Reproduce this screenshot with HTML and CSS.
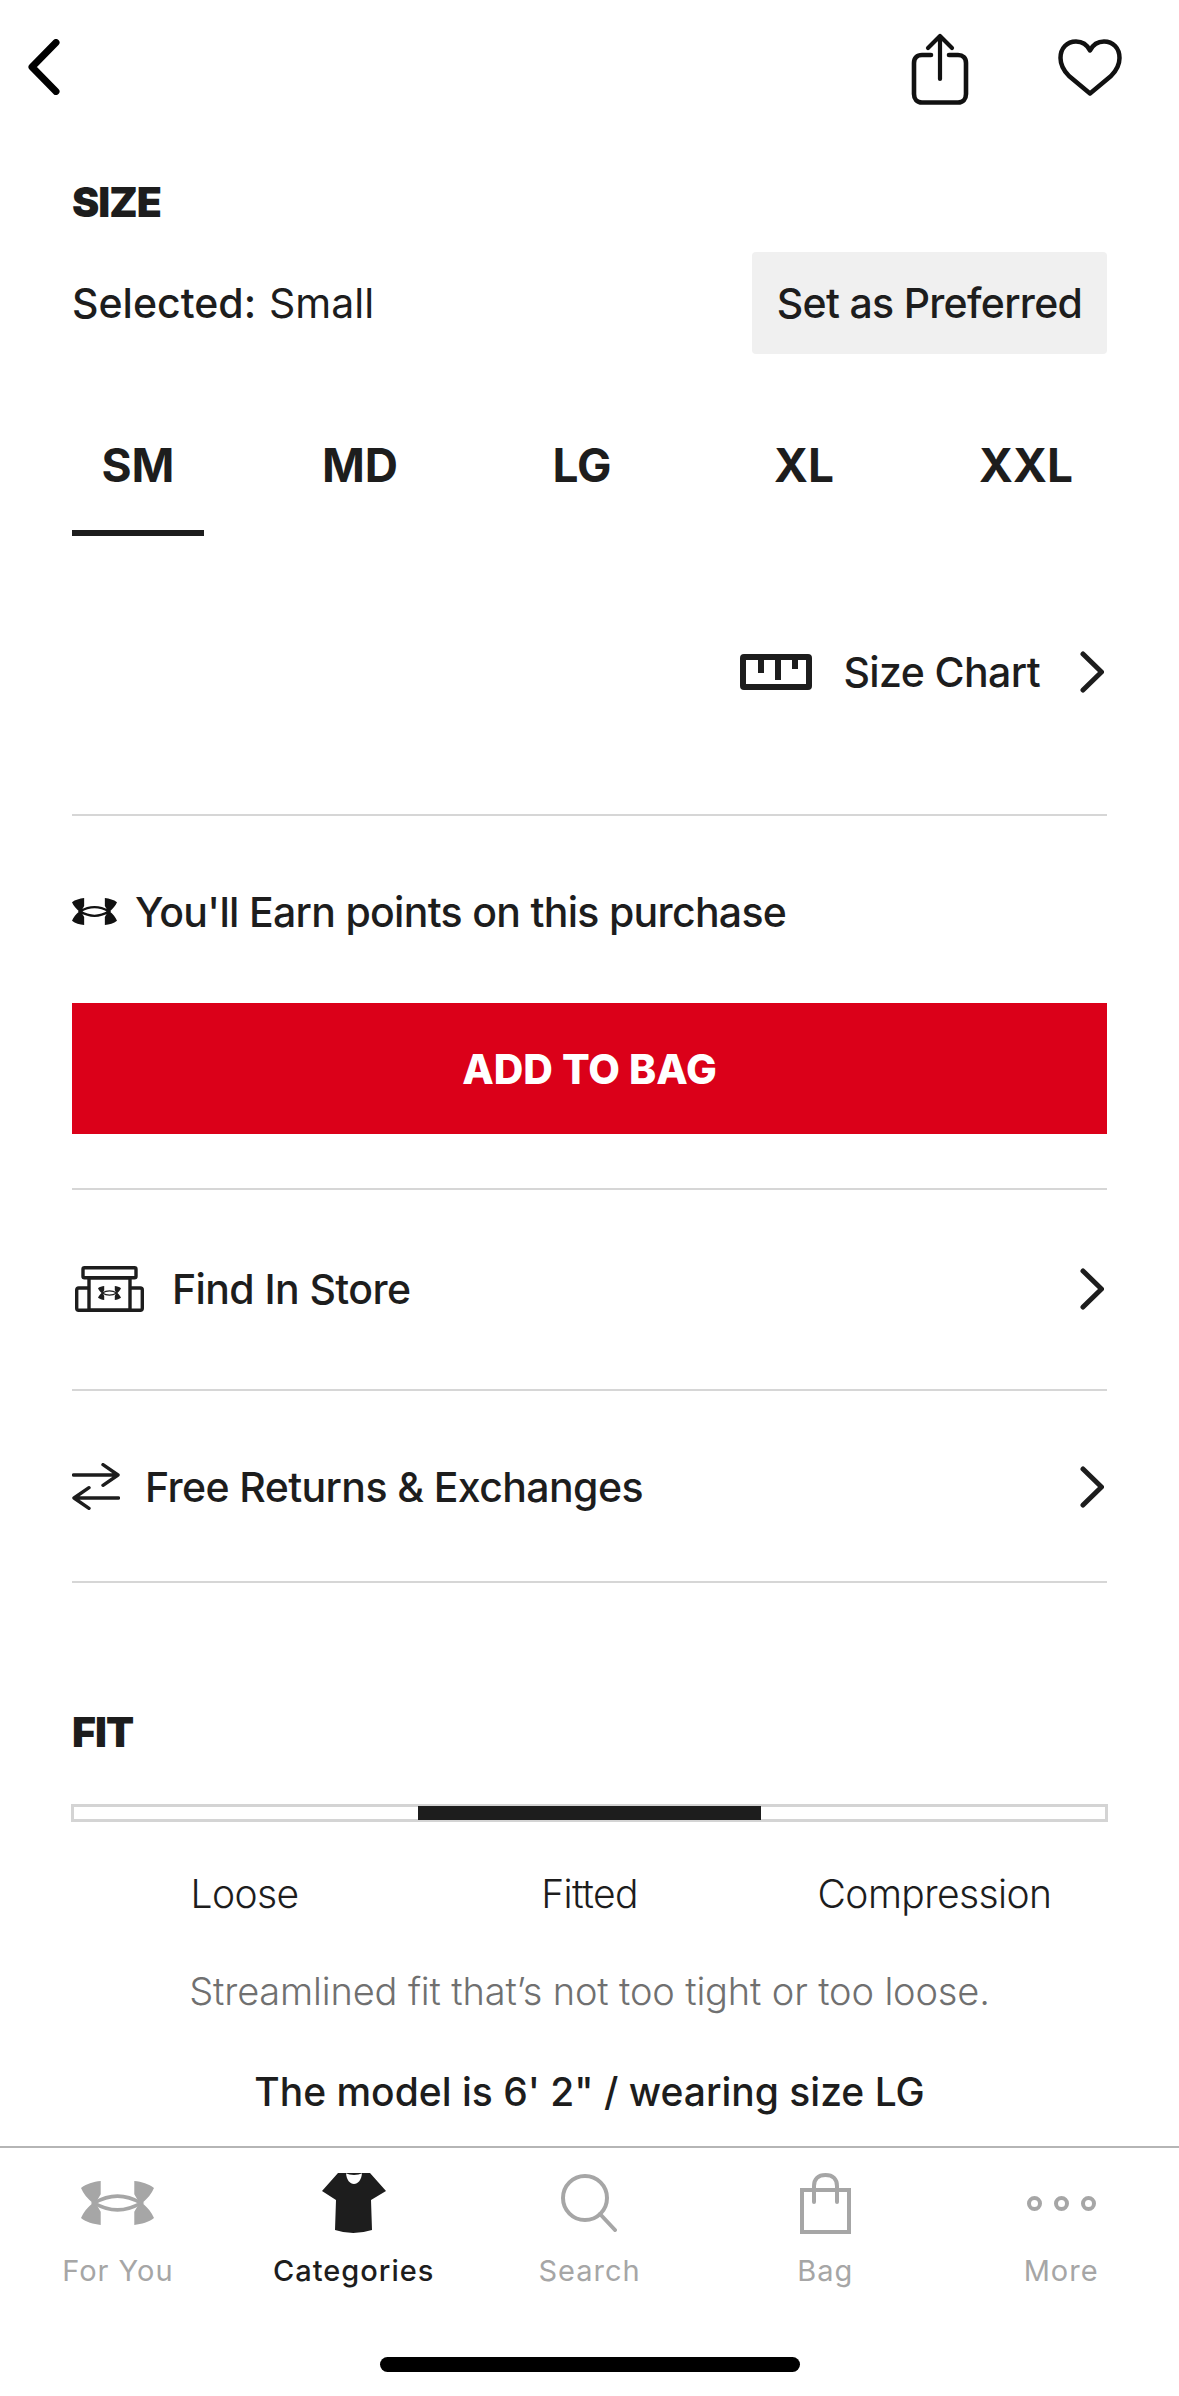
FILE: index.html
```html
<!DOCTYPE html>
<html lang="en">
<head>
<meta charset="utf-8">
<title>Size</title>
<link rel="stylesheet" href="styles.css">
</head>
<body>
<svg class="defs" width="0" height="0" aria-hidden="true">
  <symbol id="ua" viewBox="0 0 100 60">
    <path d="M27 0C17 1 7 4 0 9.500C3 17 9 24 16 30C9 36 3 43 0 50.500C7 56 17 59 27 60V42L20 30L27 18Z"/>
    <path d="M73 0C83 1 93 4 100 9.500C97 17 91 24 84 30C91 36 97 43 100 50.500C93 56 83 59 73 60V42L80 30L73 18Z"/>
    <path d="M18 30Q50 11 82 30Q50 49 18 30Z" fill="none" stroke="currentColor" stroke-width="5"/>
  </symbol>
  <symbol id="chev" viewBox="0 0 24 42">
    <path d="M3 3L21.500 21L3 39" fill="none" stroke="currentColor" stroke-width="5" stroke-linecap="round" stroke-linejoin="round"/>
  </symbol>
</svg>
<div class="screen">
  <header class="topbar">
    <svg class="ic-back" viewBox="0 0 32 56"><path d="M28 3.500L4 28L28 52.500" fill="none" stroke="#000" stroke-width="7" stroke-linecap="round" stroke-linejoin="round"/></svg>
    <div class="top-actions">
      <svg class="ic-share" viewBox="0 0 58 72"><path d="M20 22H11C6 22 3 25 3 30V61C3 66 6 69.500 11 69.500H47C52 69.500 55 66 55 61V30C55 25 52 22 47 22H38" fill="none" stroke="#111" stroke-width="4.600" stroke-linecap="round"/><path d="M29 46V4M17 15L29 3L41 15" fill="none" stroke="#111" stroke-width="4.200" stroke-linecap="round" stroke-linejoin="round"/></svg>
      <svg class="ic-heart" viewBox="0 0 64 57"><path d="M32 54.500L11 37C5 31 2.500 26 2.500 19C2.500 9 9 2.500 18 2.500C24 2.500 29 5.500 32 11.500C35 5.500 40 2.500 46 2.500C55 2.500 61.500 9 61.500 19C61.500 26 59 31 53 37Z" fill="none" stroke="#111" stroke-width="4.500" stroke-linejoin="round"/></svg>
    </div>
  </header>

  <main class="content">
    <h2 class="heading heading-size">SIZE</h2>
    <div class="selected-row">
      <p class="selected"><span class="selected-label">Selected:</span><span class="selected-value">Small</span></p>
      <button class="preferred">Set as Preferred</button>
    </div>
    <div class="tabs">
      <div class="tab tab-on">SM</div>
      <div class="tab">MD</div>
      <div class="tab">LG</div>
      <div class="tab">XL</div>
      <div class="tab">XXL</div>
    </div>
    <div class="chart-row">
      <svg class="ic-ruler" viewBox="0 0 72 36"><rect x="3" y="3" width="66" height="30" rx="1" fill="none" stroke="#1d1d1d" stroke-width="6"/><path d="M18 3H24V19H18ZM35 3H41V26H35ZM52 3H58V15H52Z" fill="#1d1d1d"/></svg>
      <span class="chart-text">Size Chart</span>
      <svg class="ic-chev"><use href="#chev"/></svg>
    </div>
    <div class="earn-row">
      <svg class="ic-ua-small"><use href="#ua"/></svg>
      <span class="earn-text">You'll Earn points on this purchase</span>
    </div>
    <button class="add">ADD TO BAG</button>
    <div class="link-row link-store">
      <svg class="ic-store" viewBox="0 0 69 46"><g fill="none" stroke="#1d1d1d" stroke-width="3.400" stroke-linejoin="round"><rect x="8" y="1.700" width="53" height="10" rx="1.500"/><rect x="14" y="11.700" width="41" height="32.600"/><path d="M14 22H3.700Q1.700 22 1.700 24V42.300Q1.700 44.300 3.700 44.300H65.300Q67.300 44.300 67.300 42.300V24Q67.300 22 65.300 22H55"/></g><svg class="ic-store-ua" x="23" y="20" width="23" height="14" viewBox="0 0 100 60"><use href="#ua"/></svg></svg>
      <span class="link-text">Find In Store</span>
      <svg class="ic-chev"><use href="#chev"/></svg>
    </div>
    <div class="link-row link-returns">
      <svg class="ic-returns" viewBox="0 0 48 47"><path d="M1.500 12H46M31 1.700L46 12L31 22.300M46.500 35H2M17 24.700L2 35L17 45.300" fill="none" stroke="#1d1d1d" stroke-width="3.400" stroke-linecap="round" stroke-linejoin="round"/></svg>
      <span class="link-text">Free Returns &amp; Exchanges</span>
      <svg class="ic-chev"><use href="#chev"/></svg>
    </div>
    <h2 class="heading heading-fit">FIT</h2>
    <div class="fit-bar"><div class="fit-seg"></div><div class="fit-seg fit-on"></div><div class="fit-seg"></div></div>
    <div class="fit-labels"><span>Loose</span><span>Fitted</span><span>Compression</span></div>
    <p class="fit-desc">Streamlined fit that’s not too tight or too loose.</p>
    <p class="fit-model">The model is 6' 2" / wearing size LG</p>
  </main>

  <nav class="tabbar">
    <div class="nav-item">
      <div class="nav-icon"><svg class="ic-nav-ua"><use href="#ua"/></svg></div>
      <span>For You</span>
    </div>
    <div class="nav-item nav-on">
      <div class="nav-icon"><svg class="ic-nav-shirt" viewBox="0 0 64 61"><path d="M16 0H24C24.500 7 28 11 32 11C36 11 39.500 7 40 0H48L64 18L49 27L50 57Q31 63 13 57L14 27L0 18Z" fill="#1d1d1d"/><path d="M23 0Q32 4 41 0Z" fill="#1d1d1d"/></svg></div>
      <span>Categories</span>
    </div>
    <div class="nav-item">
      <div class="nav-icon"><svg class="ic-nav-search" viewBox="0 0 56 58"><circle cx="24" cy="24" r="22" fill="none" stroke="#a6a6a6" stroke-width="4"/><path d="M39 40L54 56" stroke="#a6a6a6" stroke-width="4" stroke-linecap="round"/></svg></div>
      <span>Search</span>
    </div>
    <div class="nav-item">
      <div class="nav-icon"><svg class="ic-nav-bag" viewBox="0 0 51 61"><path d="M2 17H49V59H2Z" fill="none" stroke="#a6a6a6" stroke-width="4"/><path d="M14 29V13C14 6 18 2 25.500 2C33 2 37 6 37 13V29" fill="none" stroke="#a6a6a6" stroke-width="4" stroke-linecap="round"/></svg></div>
      <span>Bag</span>
    </div>
    <div class="nav-item">
      <div class="nav-icon"><svg class="ic-nav-more" viewBox="0 0 69 15"><g fill="none" stroke="#a6a6a6" stroke-width="4"><circle cx="7.500" cy="7.500" r="5.500"/><circle cx="34.500" cy="7.500" r="5.500"/><circle cx="61.500" cy="7.500" r="5.500"/></g></svg></div>
      <span>More</span>
    </div>
  </nav>
  <div class="home-area"><div class="home-bar"></div></div>
</div>
</body>
</html>
```
FILE: styles.css
```css
* { box-sizing: border-box; }
html, body { margin: 0; padding: 0; background: #fff; }
body { font-family: Inter, "Noto Sans", sans-serif; color: #1d1d1d; }
.defs { position: absolute; }
.screen { width: 1179px; height: 2396px; display: flex; flex-direction: column; overflow: hidden; }

.topbar { height: 150px; flex: none; padding: 0 57px 0 28px; display: flex; justify-content: space-between; align-items: flex-start; }
.ic-back { width: 32px; height: 56px; margin-top: 39px; }
.top-actions { display: flex; gap: 89px; align-items: flex-start; }
.ic-share { width: 58px; height: 72px; margin-top: 33px; }
.ic-heart { width: 64px; height: 57px; margin-top: 39px; }

.content { flex: 1; padding: 0 72px; display: flex; flex-direction: column; min-height: 0; }
.heading { margin: 0; font-size: 41px; font-weight: 900; line-height: 50px; letter-spacing: -1px; }
.heading-size { margin-top: 27px; }
.selected-row { margin-top: 25px; height: 102px; flex: none; display: flex; justify-content: space-between; align-items: center; }
.selected { margin: 0; font-size: 41px; }
.selected-label { font-weight: 500; margin-right: 13px; }
.selected-value { font-weight: 400; }
.preferred { width: 355px; height: 102px; border: 0; border-radius: 4px; background: #f0f0f0; color: #1d1d1d; font: 500 41px Inter, sans-serif; letter-spacing: -0.7px; padding: 0; }

.tabs { margin-top: 76px; display: flex; gap: 90px; flex: none; }
.tab { width: 132px; flex: none; height: 106px; padding-top: 8px; font-size: 46px; font-weight: 700; line-height: 54px; text-align: center; white-space: nowrap; }
.tab-on { border-bottom: 6px solid #1d1d1d; }

.chart-row { height: 280px; flex: none; padding-top: 111px; display: flex; align-items: flex-start; justify-content: flex-end; border-bottom: 2px solid #d6d6d6; }
.ic-ruler { width: 72px; height: 36px; margin-top: 7px; margin-right: 31px; }
.chart-text { font-size: 41px; font-weight: 500; line-height: 50px; letter-spacing: -0.6px; }
.chart-row .ic-chev { margin-left: 40px; margin-right: 3px; margin-top: 4px; }
.ic-chev { width: 24px; height: 42px; flex: none; }

.earn-row { height: 187px; flex: none; padding-top: 4px; display: flex; align-items: center; }
.ic-ua-small { width: 45px; height: 27px; margin-right: 18px; fill: currentColor; color: #111; }
.earn-text { font-size: 41px; font-weight: 500; letter-spacing: -0.7px; }

.add { display: block; width: 100%; height: 131px; flex: none; border: 0; background: #db0019; color: #fff; font: 800 41px Inter, sans-serif; padding: 0; }

.link-row { display: flex; align-items: center; flex: none; border-bottom: 2px solid #d6d6d6; }
.link-row .ic-chev { margin-left: auto; margin-right: 3px; }
.link-text { font-size: 41px; font-weight: 500; letter-spacing: -0.6px; }
.link-store { height: 203px; margin-top: 54px; border-top: 2px solid #d6d6d6; padding-left: 3px; padding-bottom: 2px; }
.link-returns { height: 192px; padding-top: 1px; }
.ic-store { width: 69px; height: 46px; margin-right: 28px; }
.ic-store-ua { fill: #1d1d1d; color: #1d1d1d; }
.ic-returns { width: 48px; height: 47px; margin-right: 25px; }

.heading-fit { margin-top: 124px; }
.fit-bar { margin-top: 47px; height: 18px; flex: none; display: grid; grid-template-columns: repeat(3, 1fr); border: 3px solid #d4d4d4; margin-left: -1px; margin-right: -1px; }
.fit-on { background: #1d1d1d; margin: -1px 0; }
.fit-labels { margin-top: 48px; display: grid; grid-template-columns: repeat(3, 1fr); text-align: center; font-size: 39px; line-height: 48px; font-weight: 300; letter-spacing: -0.6px; }
.fit-desc { margin: 49px 0 0; text-align: center; font-size: 38px; line-height: 48px; font-weight: 300; letter-spacing: -0.15px; color: #707070; }
.fit-model { margin: 53px 0 0; text-align: center; font-size: 39px; line-height: 48px; font-weight: 500; }

.tabbar { height: 164px; flex: none; border-top: 2px solid #b5b5b5; display: grid; grid-template-columns: repeat(5, 1fr); color: #a6a6a6; }
.nav-item { display: flex; flex-direction: column; align-items: center; font-size: 29px; letter-spacing: 1px; line-height: 34px; }
.nav-on { color: #1d1d1d; font-weight: 500; }
.nav-icon { height: 106px; display: flex; align-items: center; justify-content: center; padding-top: 4px; flex: none; }
.ic-nav-ua { width: 73px; height: 44px; fill: currentColor; }
.ic-nav-shirt { width: 64px; height: 61px; }
.ic-nav-search { width: 56px; height: 58px; }
.ic-nav-bag { width: 51px; height: 61px; }
.ic-nav-more { width: 69px; height: 15px; }

.home-area { height: 86px; flex: none; display: flex; justify-content: center; padding-top: 47px; }
.home-bar { width: 420px; height: 15px; border-radius: 8px; background: #000; }
```
